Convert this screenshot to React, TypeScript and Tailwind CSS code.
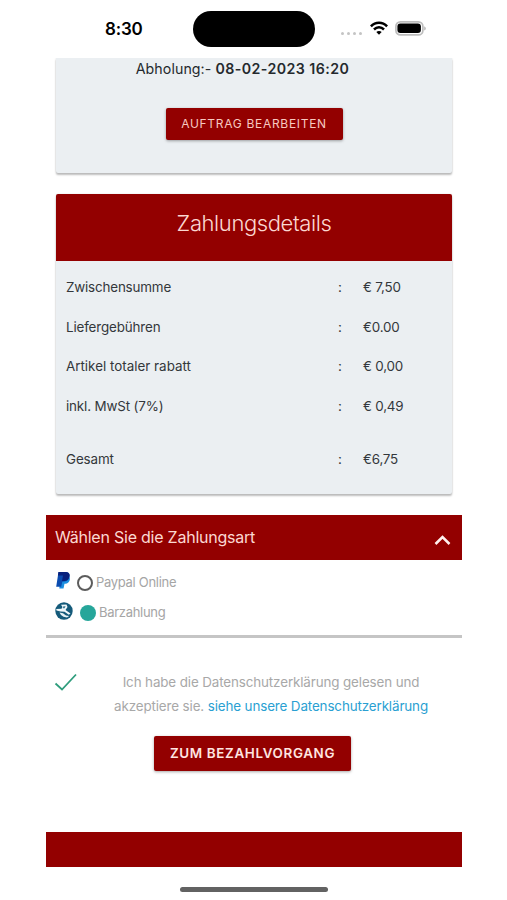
const rows = [
  { label: 'Zwischensumme', value: '€ 7,50', tracking: 'tracking-[-0.17px]' },
  { label: 'Liefergebühren', value: '€0.00', tracking: 'tracking-[-0.14px]' },
  { label: 'Artikel totaler rabatt', value: '€ 0,00', tracking: 'tracking-[0px]' },
  { label: 'inkl. MwSt (7%)', value: '€ 0,49', tracking: 'tracking-[-0.14px]' },
];

function StatusBar() {
  return (
    <header className="flex h-[58px] items-start">
      <div className="ml-[105px] mt-[16px] w-[88px] text-[17px] leading-[26px] font-semibold tracking-[-0.2px] text-black">8:30</div>
      <div className="mt-[11px] h-[36px] w-[122px] rounded-full bg-black" />
      <div className="ml-[26px] mt-[32px] flex gap-[3px]">
        <i className="size-[3px] rounded-full bg-[#c4c4c4]" />
        <i className="size-[3px] rounded-full bg-[#c4c4c4]" />
        <i className="size-[3px] rounded-full bg-[#c4c4c4]" />
        <i className="size-[3px] rounded-full bg-[#c4c4c4]" />
      </div>
      <svg className="ml-[8px] mt-[21px]" width="18" height="14" viewBox="0 0 18 14" fill="none" stroke="#000" strokeWidth="2.5">
        <path d="M.9 5.3C5.5.4 12.5.4 17.1 5.3" />
        <path d="M4 8.5C6.9 5.6 11.1 5.6 14 8.5" />
        <path d="M9 13.7 6.3 11C7.8 9.6 10.2 9.6 11.7 11Z" fill="#000" stroke="none" />
      </svg>
      <svg className="ml-[7px] mt-[21px]" width="32" height="15" viewBox="0 0 32 15">
        <rect x=".9" y=".9" width="27" height="13" rx="4.5" fill="#fff" stroke="#bdbdbd" strokeWidth="1.7" />
        <rect x="2.4" y="2.6" width="23.5" height="9.4" rx="3" fill="#000" />
        <path d="M29.3 5.2C31.2 6 31.2 8.8 29.3 9.6Z" fill="#aaa" />
      </svg>
    </header>
  );
}

function Row({ label, value, tracking }: { label: string; value: string; tracking: string }) {
  return (
    <div className="flex h-5 items-center text-[13.4px] text-[#33373b]">
      <span className={`w-[272px] ${tracking}`}>{label}</span>
      <span className="w-[25px]">:</span>
      <span className="tracking-[-0.2px]">{value}</span>
    </div>
  );
}

function PaypalIcon() {
  return (
    <svg className="-mt-[5px]" width="16" height="18" viewBox="0 0 16 18">
      <path d="M4.500 5H12.500C15.500 7 13.500 12.500 9.500 12.700H8.500L7.500 17.500H3.300Z" fill="#1c8fe0" />
      <path d="M2.500 1H9.800C14 1 14.600 5 12.300 8.500C11 10.300 8.700 10.700 6.300 10.700L5.200 15.700H.200Z" fill="#0b4cb0" />
      <path d="M2.500 1H9.800C14 1 14.600 5 12.300 8.200C11 9.800 9 10 6 10L7 4.500H1.900Z" fill="#08207c" />
    </svg>
  );
}

function CashIcon() {
  return (
    <svg className="-ml-px -mt-[4px]" width="18" height="18" viewBox="0 0 18 18">
      <circle cx="9" cy="9" r="8.7" fill="#145a7a" />
      <path d="M6 2.800 11.500 2.500 12.500 5 10.500 8 15.500 11.500 13.800 12.800 9.500 9.800 5.500 9.500 1.500 8.500 1.200 7 6.500 6.800 7.500 5Z" fill="#f0f8fb" />
      <path d="M4.500 10.500 8 11.300 11 13.600 14.200 14 12 15.500 8.500 14.800 6 13Z" fill="#e6f1f5" />
      <path d="M8.300 4.300H10.600L9.600 6.300 7.800 6.200Z" fill="#3e7c96" />
    </svg>
  );
}

export default function App() {
  return (
    <div className="h-[900px] w-full overflow-hidden bg-white font-['Inter','Liberation_Sans',sans-serif]">
      <StatusBar />
      <main className="ml-[46px] w-[416px]">
        <section className="mx-auto flex h-[115px] w-[396px] flex-col items-center rounded-b-[2px] bg-[#ebeff2] shadow-[0_2px_2px_rgba(0,0,0,0.25),0_0_2px_rgba(0,0,0,0.12)] [clip-path:inset(0_-4px_-6px_-4px)]">
          <p className="mt-px mr-[23px] h-5 text-[14.2px] leading-5 tracking-[0.08px] whitespace-nowrap text-[#24292d]">Abholung:- <b className="font-semibold tracking-[0.43px]">08-02-2023 16:20</b></p>
          <button className="mt-[29px] h-[32px] w-[177px] rounded-[2px] bg-[#930000] text-[12px] tracking-[0.7px] whitespace-nowrap text-[#f7c9c0] shadow-[0_1px_3px_rgba(0,0,0,0.35)]">AUFTRAG BEARBEITEN</button>
        </section>

        <section className="mx-auto mt-[21px] h-[300px] w-[396px] rounded-[2px] bg-[#ebeff2] shadow-[0_2px_2px_rgba(0,0,0,0.25),0_0_2px_rgba(0,0,0,0.12)]">
          <h2 className="h-[67px] rounded-t-[2px] bg-[#930000] pt-[13px] text-center text-[22px] leading-[32px] font-light tracking-[-0.4px] text-[#fbd8d2]">Zahlungsdetails</h2>
          <div className="flex flex-col gap-[19.7px] px-[10px] pt-[16px]">
            {rows.map((r) => <Row key={r.label} {...r} />)}
          </div>
          <div className="px-[10px] pt-[33px]"><Row label="Gesamt" value="€6,75" tracking="tracking-[-0.1px]" /></div>
        </section>

        <section className="mt-[21px] h-[123px] border-b-[3px] border-[#c5c5c5]">
          <div className="flex h-[45px] items-center justify-between bg-[#930000] pr-[11px] pb-[2px] pl-[9px] text-[16px] tracking-[-0.23px] text-[#fbd8d2]">
            <span>Wählen Sie die Zahlungsart</span>
            <svg className="mt-[6px]" width="17" height="12" viewBox="0 0 17 12" fill="none" stroke="#fff0ed" strokeWidth="2.5"><path d="M1.5 10 8.5 3 15.5 10" /></svg>
          </div>
          <div className="flex h-[30px] items-center pt-[15px] pl-[10px] text-[13px] tracking-[-0.3px] text-[#a5a5a5]">
            <PaypalIcon />
            <span className="ml-[5px] size-[16px] rounded-full border-2 border-[#5c5c5c]" />
            <span className="ml-[3px]">Paypal Online</span>
          </div>
          <div className="flex h-[30px] items-center pt-[15px] pl-[10px] text-[13px] tracking-[-0.3px] text-[#a5a5a5]">
            <CashIcon />
            <span className="ml-[7px] size-[16px] rounded-full bg-[#26a69a]" />
            <span className="ml-[3px]">Barzahlung</span>
          </div>
        </section>

        <section className="mt-[32px] flex h-[48px]">
          <svg className="mt-[3px] ml-[8px]" width="24" height="20" viewBox="0 0 24 20" fill="none" stroke="#2f9d7d" strokeWidth="1.8"><path d="M1.5 10.5 8 16.5 22 1.5" /></svg>
          <p className="ml-[28px] w-[330px] text-center text-[13.4px] leading-6 tracking-[-0.12px] whitespace-nowrap text-[#a8a8a8]">
            Ich habe die Datenschutzerklärung gelesen und<br />
            akzeptiere sie. <a className="text-[#2a9fd2]">siehe unsere Datenschutzerklärung</a>
          </p>
        </section>
        <button className="mt-[18px] ml-[108px] block h-[35px] w-[197px] rounded-[2px] bg-[#930000] text-[13.4px] font-semibold tracking-[0.65px] whitespace-nowrap text-[#ffe5e0] shadow-[0_1px_3px_rgba(0,0,0,0.35)]">ZUM BEZAHLVORGANG</button>
        <footer className="mt-[61px] h-[35px] bg-[#930000]" />
      </main>
      <div className="mt-[20px] ml-[180px] h-[5px] w-[148px] rounded-full bg-[#626262]" />
    </div>
  );
}
